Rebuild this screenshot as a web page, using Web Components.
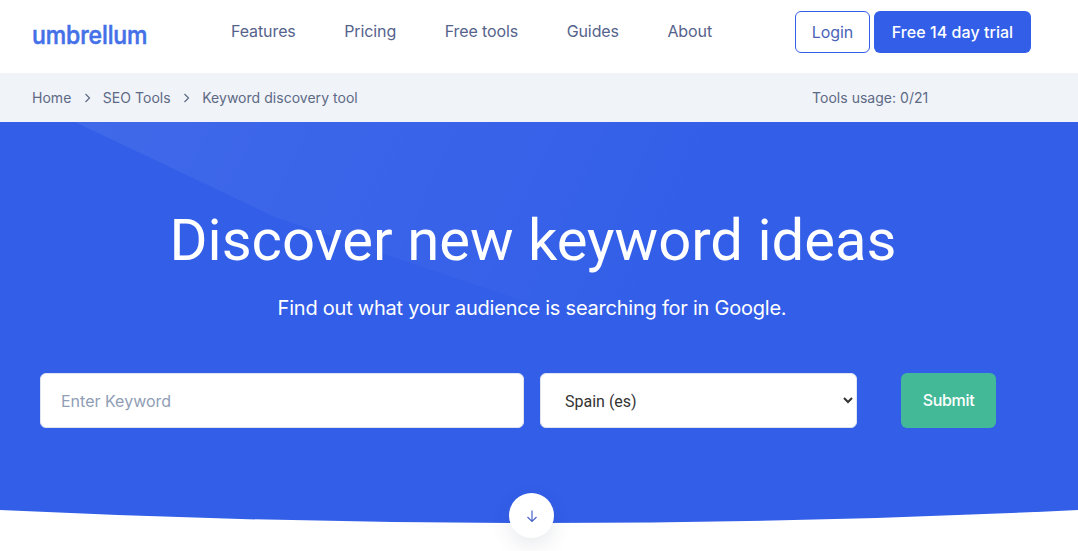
<!DOCTYPE html>
<html lang="en">
<head>
<meta charset="utf-8">
<title>Keyword discovery tool</title>
<style>
  html, body { margin: 0; padding: 0; background: #fff; }
  body { font-family: Inter, "Liberation Sans", sans-serif; overflow: hidden; height: 551px; }
</style>
</head>
<body>
<site-header></site-header>
<crumb-bar usage="Tools usage: 0/21">
  <a>Home</a><a>SEO Tools</a><a>Keyword discovery tool</a>
</crumb-bar>
<hero-section heading="Discover new keyword ideas" lead="Find out what your audience is searching for in Google.">
  <search-form></search-form>
</hero-section>
<script>
// Top navigation with logo and the two buttons.
const headerTemplate = document.createElement('template')
headerTemplate.innerHTML = `
<style>
  :host { display: flex; align-items: center; height: 73px; padding: 0 47px 0 32px; background: #fff; }
  .logo { width: 116px; font: 500 23px/1 Inter, sans-serif; letter-spacing: -.1px; color: #4470e8; -webkit-text-stroke: .5px #4470e8; white-space: nowrap; padding-bottom: 1px; transform: scaleY(1.12); transform-origin: 0 70%; }
  nav { display: flex; gap: 48.5px; margin: 0 0 12px 83px; font-size: 16px; letter-spacing: -.1px; color: #55638c; }
  .actions { display: flex; gap: 4px; margin: 0 0 10px auto; }
  .btn { display: flex; align-items: center; justify-content: center; box-sizing: border-box; height: 42px; border-radius: 6px; font-size: 16px; }
  .login { width: 75px; border: 1px solid #325ee8; color: #4a63b8; letter-spacing: -.1px; }
  .trial { width: 157px; background: #325ee8; color: #fff; font-weight: 500; letter-spacing: .05px; }
</style>
<div class="logo">umbrellum</div>
<nav><span>Features</span><span>Pricing</span><span>Free tools</span><span>Guides</span><span>About</span></nav>
<div class="actions"><div class="btn login">Login</div><div class="btn trial">Free 14 day trial</div></div>
`
customElements.define('site-header', class extends HTMLElement {
  constructor () {
    super()
    this.attachShadow({ mode: 'open' })
    this.shadowRoot.appendChild(headerTemplate.content.cloneNode(true))
  }
})

// Breadcrumb strip, the crumbs are passed in through the slot.
const crumbTemplate = document.createElement('template')
crumbTemplate.innerHTML = `
<style>
  :host { display: flex; align-items: center; height: 49px; padding-left: 32px; background: #f0f3f8; font-size: 14px; letter-spacing: .03px; color: #5d6a85; }
  .crumbs { display: flex; align-items: center; width: 780px; }
  .sep { width: 31.5px; display: flex; justify-content: center; }
  svg { display: block; }
</style>
<div class="crumbs"></div>
<span id="usage"></span>
`
customElements.define('crumb-bar', class extends HTMLElement {
  constructor () {
    super()
    this.attachShadow({ mode: 'open' })
    this.shadowRoot.appendChild(crumbTemplate.content.cloneNode(true))
  }

  connectedCallback () {
    this.shadowRoot.querySelector('#usage').textContent = this.getAttribute('usage')
    const crumbs = this.shadowRoot.querySelector('.crumbs')
    const items = [...this.children]
    items.forEach((item, i) => {
      item.slot = 'c' + i
      const slot = document.createElement('slot')
      slot.name = 'c' + i
      crumbs.appendChild(slot)
      if (i < items.length - 1) {
        const sep = document.createElement('span')
        sep.className = 'sep'
        sep.innerHTML = '<svg width="7" height="10" viewBox="0 0 7 10" fill="none" stroke="#5d6a85" stroke-width="1.2"><path d="M1.5 1l4 4-4 4"/></svg>'
        crumbs.appendChild(sep)
      }
    })
  }
})

// Blue hero with the curved bottom edge.
const heroTemplate = document.createElement('template')
heroTemplate.innerHTML = `
<style>
  :host { display: block; position: relative; height: 429px; }
  .panel { position: relative; box-sizing: border-box; height: 402px; padding-top: 83px; background: #325ee8; color: #fff; text-align: center; clip-path: path('M0 0H1078V388Q539 414 0 388Z'); }
  .panel::before { content: ''; position: absolute; inset: 0; background: linear-gradient(115deg, rgba(255,255,255,.07) 5%, rgba(255,255,255,0) 62%); clip-path: polygon(75px 0, 1078px 0, 1078px 300px, 900px 250px, 520px 178px, 275px 95px); }
  h1 { position: relative; margin: 0 0 18px; padding-right: 12px; font-family: Roboto, sans-serif; font-size: 58px; font-weight: 400; line-height: 70px; }
  p { position: relative; margin: 0 0 50px; padding-right: 14px; font-size: 20px; line-height: 30px; letter-spacing: -.23px; }
  .form { position: relative; padding-left: 40px; text-align: left; }
  .down { position: absolute; left: 509px; top: 371px; width: 45px; height: 45px; display: flex; align-items: center; justify-content: center; border-radius: 50%; background: #fff; box-shadow: 0 8px 20px rgba(50,60,90,.1); }
</style>
<div class="panel">
  <h1></h1>
  <p></p>
  <div class="form"><slot></slot></div>
</div>
<div class="down">
  <svg width="14" height="14" viewBox="0 0 14 14" fill="none" stroke="#4a63c8" stroke-width="1.2"><path d="M7 1.5v11M2.5 8l4.500 4.500L11.500 8"/></svg>
</div>
`
customElements.define('hero-section', class extends HTMLElement {
  constructor () {
    super()
    this.attachShadow({ mode: 'open' })
    this.shadowRoot.appendChild(heroTemplate.content.cloneNode(true))
  }

  connectedCallback () {
    this.shadowRoot.querySelector('h1').textContent = this.getAttribute('heading')
    this.shadowRoot.querySelector('p').textContent = this.getAttribute('lead')
  }
})

// Keyword input, country select and submit.
const formTemplate = document.createElement('template')
formTemplate.innerHTML = `
<style>
  :host { display: flex; height: 55px; }
  input, select, button { box-sizing: border-box; height: 55px; border-radius: 6px; font-family: inherit; font-size: 16px; }
  input { width: 484px; padding: 0 20px; border: 1px solid #dfe5f0; background: #fff; outline: none; color: #333; }
  input::placeholder { color: #8f9db5; opacity: 1; }
  select { width: 317px; margin-left: 16px; padding: 1px 20px 0; border: 1px solid #dfe5f0; background: #fff; color: #333; font-family: Roboto, sans-serif; }
  button { width: 95px; margin-left: 44px; padding-bottom: 2px; border: 0; background: #43b997; color: #fff; font-weight: 500; letter-spacing: -.3px; }
</style>
<input type="text" placeholder="Enter Keyword">
<select><option>Spain (es)</option></select>
<button type="button">Submit</button>
`
customElements.define('search-form', class extends HTMLElement {
  constructor () {
    super()
    this.attachShadow({ mode: 'open' })
    this.shadowRoot.appendChild(formTemplate.content.cloneNode(true))
  }
})
</script>
</body>
</html>
